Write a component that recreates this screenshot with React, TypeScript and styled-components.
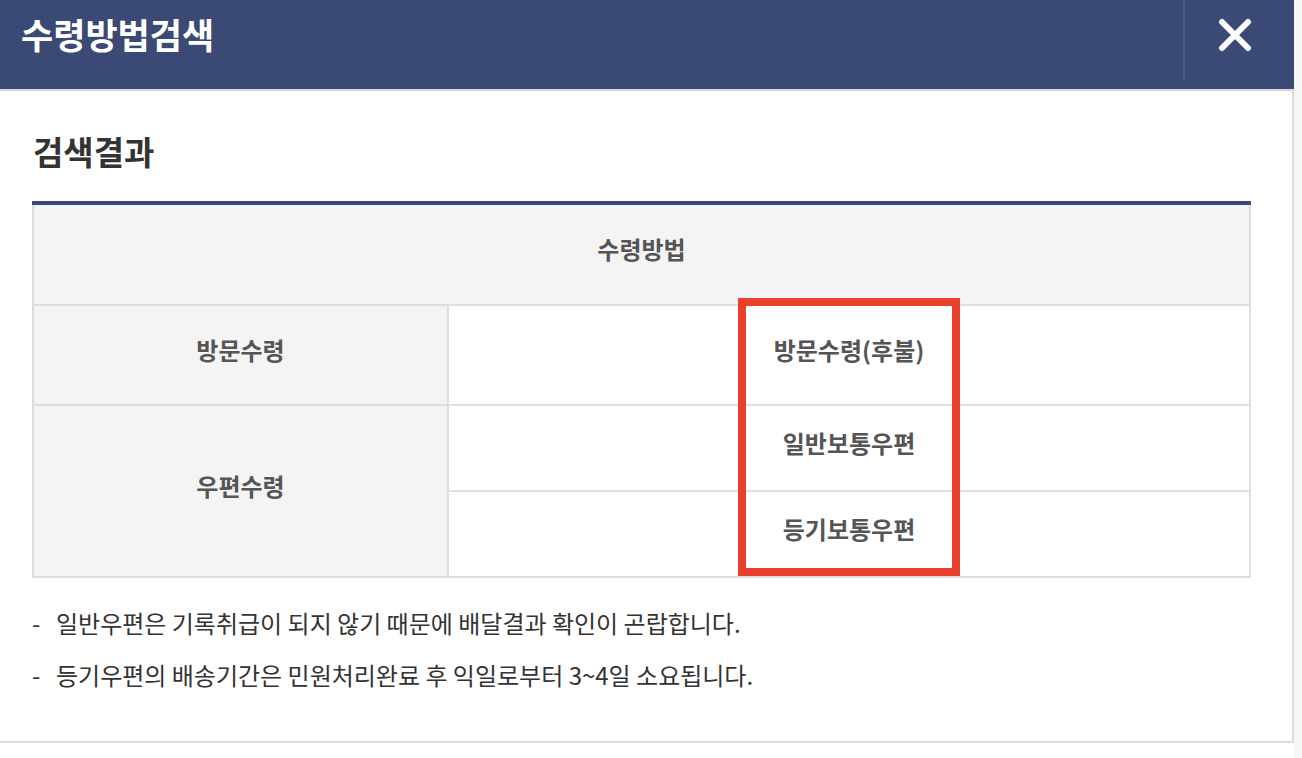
import React from "react";
import styled, { createGlobalStyle } from "styled-components";

const GlobalStyle = createGlobalStyle`
  html, body {
    margin: 0;
    padding: 0;
    background: #ffffff;
  }
  body {
    font-family: "Noto Sans CJK KR", "Noto Sans", sans-serif;
  }
`;

const Page = styled.div`
  display: flex;
  width: 1302px;
  height: 758px;
  overflow: hidden;
`;

const Modal = styled.div`
  width: 1294px;
  display: flex;
  flex-direction: column;
`;

const Rail = styled.div`
  flex: 1;
  background: #f6f6f6;
`;

const Header = styled.header`
  height: 89px;
  background: #3a4a74;
  border-bottom: 2px solid #d6d9e0;
  display: flex;
  align-items: flex-start;
`;

const Title = styled.h1`
  flex: 1;
  margin: 0;
  padding: 11px 0 0 21px;
  color: #ffffff;
  font-size: 35px;
  font-weight: 700;
  line-height: 46px;
  letter-spacing: 0;
`;

const Divider = styled.div`
  width: 2px;
  height: 80px;
  background: #4b5b86;
`;

const CloseButton = styled.button`
  width: 109px;
  height: 70px;
  border: 0;
  padding: 0 10px 0 0;
  background: transparent;
  display: flex;
  align-items: center;
  justify-content: center;
  cursor: pointer;
`;

const Body = styled.div`
  flex: 0 0 auto;
  height: 652px;
  box-sizing: border-box;
  border-right: 2px solid #dddddd;
  border-bottom: 2px solid #dddddd;
  padding: 35px 41px 0 32px;
`;

const Heading = styled.h2`
  margin: 0 0 25px 1px;
  font-size: 33px;
  font-weight: 700;
  color: #333333;
  line-height: 50px;
  letter-spacing: 0;
`;

const TableWrap = styled.div`
  position: relative;
  width: 1219px;
`;

const Table = styled.table`
  width: 100%;
  border-collapse: collapse;
  border-top: 4px solid #3a4a74;
  table-layout: fixed;
`;

const Col = styled.col<{ $w?: number }>`
  width: ${(p) => (p.$w ? `${p.$w}px` : "auto")};
`;

const cellText = `
  color: #555555;
  font-size: 24px;
  font-weight: 700;
  letter-spacing: 0;
  padding: 0 0 12px 0;
  border: 2px solid #dedede;
`;

const HeadCell = styled.th`
  ${cellText}
  height: 87px;
  background: #f4f4f4;
  border-top: 0;
`;

const LabelCell = styled.th<{ $h: number }>`
  ${cellText}
  height: ${(p) => p.$h}px;
  background: #f4f4f4;
`;

const ValueCell = styled.td<{ $h: number }>`
  ${cellText}
  height: ${(p) => p.$h}px;
  background: #ffffff;
  text-align: center;
`;

const Highlight = styled.div`
  position: absolute;
  left: 706px;
  top: 97px;
  width: 222px;
  height: 278px;
  box-sizing: border-box;
  border: 8px solid #e8402a;
  pointer-events: none;
`;

const Notes = styled.ul`
  list-style: none;
  margin: 26px 0 0 0;
  padding: 0;
  display: flex;
  flex-direction: column;
  gap: 14px;
`;

const Note = styled.li`
  display: flex;
  font-size: 24px;
  line-height: 38px;
  color: #333333;
  font-weight: 400;
  letter-spacing: 0;
`;

const Dash = styled.span`
  width: 24px;
  flex: 0 0 24px;
`;

const CloseIcon = () => (
  <svg width="34" height="34" viewBox="0 0 34 34" aria-hidden="true">
    <path
      d="M4 4 L30 30 M30 4 L4 30"
      stroke="#ffffff"
      strokeWidth="6"
      strokeLinecap="round"
    />
  </svg>
);

export default function App() {
  return (
    <>
      <GlobalStyle />
      <Page>
        <Modal>
          <Header>
            <Title>수령방법검색</Title>
            <Divider />
            <CloseButton aria-label="닫기">
              <CloseIcon />
            </CloseButton>
          </Header>
          <Body>
            <Heading>검색결과</Heading>
            <TableWrap>
              <Table>
                <colgroup>
                  <Col $w={415} />
                  <Col />
                </colgroup>
                <thead>
                  <tr>
                    <HeadCell colSpan={2}>수령방법</HeadCell>
                  </tr>
                </thead>
                <tbody>
                  <tr>
                    <LabelCell $h={86}>방문수령</LabelCell>
                    <ValueCell $h={86}>방문수령(후불)</ValueCell>
                  </tr>
                  <tr>
                    <LabelCell $h={72} rowSpan={2}>
                      우편수령
                    </LabelCell>
                    <ValueCell $h={72}>일반보통우편</ValueCell>
                  </tr>
                  <tr>
                    <ValueCell $h={72}>등기보통우편</ValueCell>
                  </tr>
                </tbody>
              </Table>
              <Highlight />
            </TableWrap>
            <Notes>
              <Note>
                <Dash>-</Dash>
                일반우편은 기록취급이 되지 않기 때문에 배달결과 확인이 곤랍합니다.
              </Note>
              <Note>
                <Dash>-</Dash>
                등기우편의 배송기간은 민원처리완료 후 익일로부터 3~4일 소요됩니다.
              </Note>
            </Notes>
          </Body>
        </Modal>
        <Rail />
      </Page>
    </>
  );
}
